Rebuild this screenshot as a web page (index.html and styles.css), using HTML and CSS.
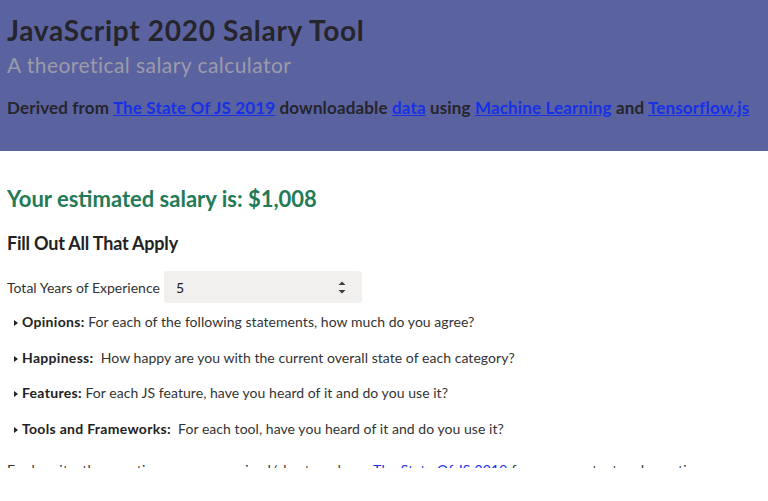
FILE: index.html
```html
<!DOCTYPE html>
<html lang="en">
<head>
<meta charset="utf-8">
<title>JavaScript 2020 Salary Tool</title>
<link rel="stylesheet" href="styles.css">
</head>
<body>
<div class="viewport">
  <header class="hero">
    <h1 class="title">JavaScript 2020 Salary Tool</h1>
    <p class="subtitle">A theoretical salary calculator</p>
    <p class="derived">Derived from <a href="#">The State Of JS 2019</a> downloadable <a href="#">data</a> using <a href="#">Machine Learning</a> and <a href="#">Tensorflow.js</a></p>
  </header>
  <main class="content">
    <h2 class="salary">Your estimated salary is: $1,008</h2>
    <h3 class="fill">Fill Out All That Apply</h3>
    <div class="field-row">
      <label class="field-label">Total Years of Experience</label>
      <div class="number-input">
        <span class="number-value">5</span>
        <svg class="spinner" width="8" height="13" viewBox="0 0 8 13"><path d="M4 0.5 L7.5 4 L0.5 4 Z M0.5 9 L7.5 9 L4 12.5 Z" fill="#3c3c3c"/></svg>
      </div>
    </div>
    <details class="section"><summary><b>Opinions:</b> For each of the following statements, how much do you agree?</summary></details>
    <details class="section"><summary><b>Happiness:</b>&nbsp; How happy are you with the current overall state of each category?</summary></details>
    <details class="section"><summary><b>Features:</b> For each JS feature, have you heard of it and do you use it?</summary></details>
    <details class="section"><summary><b>Tools and Frameworks:</b>&nbsp; For each tool, have you heard of it and do you use it?</summary></details>
    <p class="note">For brevity, the questions are summarized/shortened, see <a href="#">The State Of JS 2019</a> for more context and questions.</p>
  </main>
</div>
</body>
</html>
```

FILE: styles.css
```css
* { box-sizing: border-box; }
html, body { margin: 0; padding: 0; background: #fff; }
body { font-family: Lato, "Open Sans", sans-serif; color: #222; }
a { color: #1631e6; }

.viewport { height: 468px; overflow: hidden; }

.hero {
  background: #5b62a0;
  height: 151px;
  padding: 13px 7px 0;
}
.title { margin: 0; font-size: 28px; line-height: 34px; font-weight: 700; color: #25252b; letter-spacing: 0.7px; }
.subtitle { margin: 5px 0 0; font-size: 21px; line-height: 26px; color: #9c9ca8; letter-spacing: 0.45px; }
.derived { margin: 19px 0 0; font-size: 17px; line-height: 22px; font-weight: 700; color: #25252b; letter-spacing: 0.15px; }

.content { padding: 0 7px; }
.salary { margin: 34px 0 0; font-size: 22px; line-height: 28px; font-weight: 700; color: #237a57; }
.fill { margin: 18px 0 0; font-size: 18px; line-height: 24px; font-weight: 700; color: #222; letter-spacing: -0.2px; }

.field-row { display: flex; align-items: center; gap: 4px; margin-top: 16px; font-size: 14px; color: #333; }
.number-input {
  width: 198px; height: 32px;
  background: #f1f0ef;
  border-radius: 3px;
  display: flex; align-items: center; justify-content: space-between;
  padding: 0 16px 0 12px;
  color: #222;
}

.section { margin-top: 9px; margin-bottom: 6.5px; font-size: 14px; line-height: 20px; color: #333; letter-spacing: 0.05px; }
.section + .section { margin-top: 15.5px; }
.section summary { list-style: none; cursor: pointer; display: block; }
.section summary::-webkit-details-marker { display: none; }
.section summary::before {
  content: "";
  display: inline-block;
  vertical-align: 1px;
  width: 0; height: 0;
  border-left: 4px solid #222;
  border-top: 3.5px solid transparent;
  border-bottom: 3.5px solid transparent;
  margin: 0 4px 0 7px;
}
.section b { color: #222; letter-spacing: 0.3px; }

.note { margin: 21px 0 0; font-size: 14px; line-height: 20px; color: #333; letter-spacing: 0.2px; }
```
